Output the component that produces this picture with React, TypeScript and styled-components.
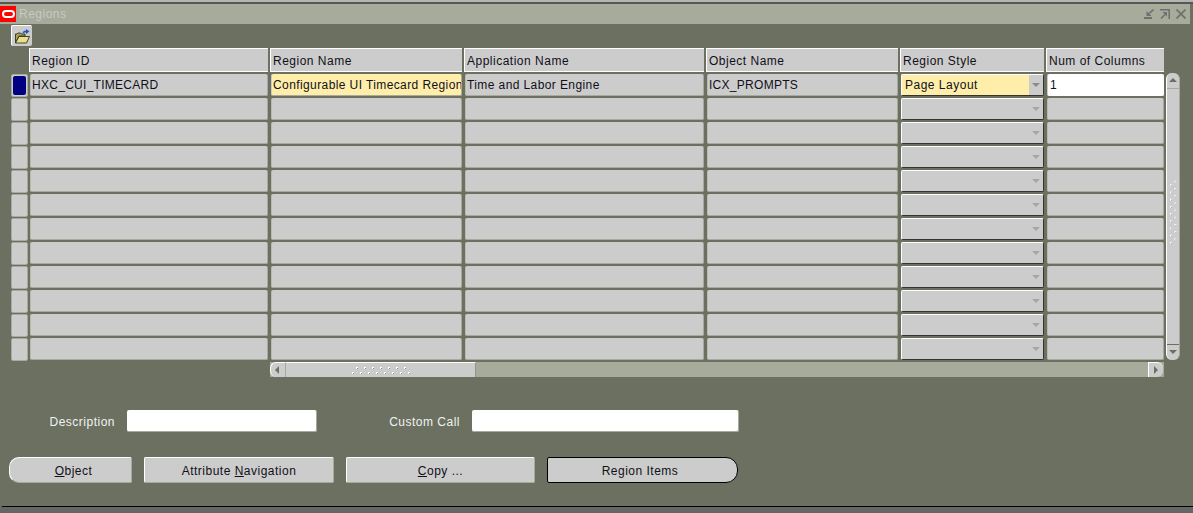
import React from 'react'
import styled, {createGlobalStyle} from "styled-components"

const columns = ["Region ID", "Region Name", "Application Name", "Object Name", "Region Style", "Num of Columns"]

const firstRow = ["HXC_CUI_TIMECARD", "Configurable UI Timecard Region", "Time and Labor Engine", "ICX_PROMPTS", "Page Layout", "1"]

const emptyRows = Array.from({length: 11}, (_, i) => i)

function Grip({cols, rows, stagger}: {cols: number, rows: number, stagger: "x" | "y"}) {
    const dots = []
    for (let c = 0; c < cols; c++) {
        for (let r = 0; r < rows; r++) {
            if (stagger === "x" && r === 0 && c === cols - 1) continue
            const x = stagger === "x" ? c * 8 + (r % 2 === 0 ? 4 : 0) : c * 5
            const y = stagger === "y" ? r * 8 + (c % 2 === 0 ? 4 : 0) : r * 5
            dots.push(<g key={c + "-" + r}>
                <rect x={x} y={y} width="2" height="2" fill="#fff"/>
                <rect x={x + 1} y={y + 1} width="1" height="1" fill="#8c8c8c"/>
            </g>)
        }
    }
    const w = stagger === "x" ? cols * 8 - 6 : cols * 5
    const h = stagger === "y" ? rows * 8 + 4 : rows * 5 - 3
    return <svg width={w} height={h} viewBox={`0 0 ${w} ${h}`}>{dots}</svg>
}

function Folder() {
    return (
        <svg width="15" height="15" viewBox="0 0 15 15">
            <path d="M0.500 5h1.500l1-1h2.500l1 1h3.500v2H4L0.500 14z" fill="#a8a45c" stroke="#33331c" strokeWidth="0.9"/>
            <path d="M4 7.500h10.500L11.500 14H0.500z" fill="#e8e08c" stroke="#33331c" strokeWidth="0.9"/>
            <path d="M7.500 4.500c0-2 1.500-3 3.500-3V0l3.500 2.500L11 5V3.500c-1.500 0-2.500 0.200-3.500 1z" fill="#1f55c8"/>
        </svg>
    )
}

function WindowButtons() {
    return (
        <>
            <svg width="10" height="10" viewBox="0 0 10 10">
                <path d="M9.500 0.500L4 5.500" fill="none" stroke="#707070" strokeWidth="1.600"/>
                <path d="M2.500 2v5h5z" fill="#707070"/>
                <rect x="0" y="8" width="8" height="2" fill="#707070"/>
            </svg>
            <svg width="10" height="10" viewBox="0 0 10 10">
                <path d="M0 0.800h9.200V10" fill="none" stroke="#707070" strokeWidth="1.600"/>
                <path d="M1 9.500L5 5.500" fill="none" stroke="#707070" strokeWidth="1.600"/>
                <path d="M2.500 3h4.500v4.500z" fill="#707070"/>
            </svg>
            <svg width="10" height="10" viewBox="0 0 10 10">
                <path d="M0.500 0.500l9 9M9.500 0.500l-9 9" fill="none" stroke="#707070" strokeWidth="1.700"/>
            </svg>
        </>
    )
}

function App() {
    return (
        <Main>
            <GlobalStyle/>
            <TopEdge/>
            <TitleBar>
                <Logo><LogoRing/></Logo>
                <WindowTitle>Regions</WindowTitle>
                <WindowControls><WindowButtons/></WindowControls>
            </TitleBar>
            <Content>
                <Toolbar>
                    <ToolButton><Folder/></ToolButton>
                </Toolbar>
                <TableArea>
                    <Table>
                        <span/>
                        {columns.map(c => <HeaderCell key={c}>{c}</HeaderCell>)}
                        <Indicator><IndicatorFill/></Indicator>
                        <Field $caps>{firstRow[0]}</Field>
                        <Field $tone="required">{firstRow[1]}</Field>
                        <Field>{firstRow[2]}</Field>
                        <Field $caps>{firstRow[3]}</Field>
                        <SelectField $tone="required">
                            <SelectText>{firstRow[4]}</SelectText>
                            <Arrow $active/>
                        </SelectField>
                        <Field $tone="active">{firstRow[5]}</Field>
                        {emptyRows.map(i => (
                            <React.Fragment key={i}>
                                <Indicator/>
                                <Field/>
                                <Field/>
                                <Field/>
                                <Field/>
                                <SelectField>
                                    <SelectText/>
                                    <Arrow/>
                                </SelectField>
                                <Field/>
                            </React.Fragment>
                        ))}
                    </Table>
                    <VScroll>
                        <VCap/>
                        <VGrip><Grip cols={2} rows={9} stagger="y"/></VGrip>
                        <VCapBottom/>
                    </VScroll>
                </TableArea>
                <HScroll>
                    <HArrowLeft/>
                    <HThumb><Grip cols={8} rows={2} stagger="x"/></HThumb>
                    <HTrack/>
                    <HArrowRight/>
                </HScroll>
                <FormRow>
                    <FieldLabel $width={115}>Description</FieldLabel>
                    <TextInput $width={190}/>
                    <FieldLabel $width={143}>Custom Call</FieldLabel>
                    <TextInput $width={267}/>
                </FormRow>
                <ButtonRow>
                    <ActionButton $width={123} $shape="left"><u>O</u>bject</ActionButton>
                    <ActionButton $width={190}>Attribute <u>N</u>avigation</ActionButton>
                    <ActionButton $width={189}><u>C</u>opy ...</ActionButton>
                    <ActionButton $width={191} $shape="right" $focused>Region Items</ActionButton>
                </ButtonRow>
            </Content>
            <BottomEdge><BottomLine/></BottomEdge>
        </Main>
    )
}

export default App

const GlobalStyle = createGlobalStyle`
    html, body {
        margin: 0;
        padding: 0;
        background: #666666;
    }
`

const Main = styled.div`
    display: flex;
    flex-direction: column;
    width: 1193px;
    height: 513px;
    overflow: hidden;
    font-family: "Liberation Sans", Arial, sans-serif;
    font-size: 12px;
    letter-spacing: 0.5px;
    color: #101018;
    background: #6b7060;
`

const TopEdge = styled.div`
    height: 2px;
    background: #b4b4b4;
    border-bottom: 2px solid #55584c;
`

const TitleBar = styled.div`
    display: flex;
    align-items: center;
    height: 20px;
    margin-right: 3px;
    background: #a6ab9b;
`

const Logo = styled.div`
    display: flex;
    align-items: center;
    justify-content: center;
    width: 16px;
    height: 16px;
    background: #ff0000;
`

const LogoRing = styled.div`
    width: 13px;
    height: 8px;
    box-sizing: border-box;
    border: 2px solid #ffffff;
    border-radius: 4px;
`

const WindowTitle = styled.div`
    margin-left: 3px;
    color: #c8c8c8;
`

const WindowControls = styled.div`
    display: flex;
    gap: 6px;
    margin-left: auto;
    margin-right: 4px;
`

const Content = styled.div`
    flex: 1;
    display: flex;
    flex-direction: column;
`

const Toolbar = styled.div`
    display: flex;
    height: 24px;
    padding-top: 1px;
    padding-left: 11px;
    box-sizing: border-box;
`

const ToolButton = styled.div`
    display: flex;
    align-items: center;
    justify-content: center;
    width: 21px;
    height: 21px;
    box-sizing: border-box;
    background: #cccccc;
    border-top: 1px solid #ffffff;
    border-left: 1px solid #ffffff;
    border-radius: 2px;
`

const TableArea = styled.div`
    display: flex;
    margin-top: 1px;
`

const Table = styled.div`
    display: grid;
    grid-template-columns: 17px 238px 191px 239px 191px 143px 117px;
    grid-template-rows: 23px repeat(12, 22px);
    column-gap: 3px;
    row-gap: 2px;
    padding-left: 10px;
`

const HeaderCell = styled.div`
    display: flex;
    align-items: center;
    height: 22px;
    padding: 1px 0 0 2px;
    box-sizing: border-box;
    background: #cccccc;
    box-shadow: -1px 0 0 #ffffff, 0 -1px 0 #ffffff, 0 1px 0 #ffffff, -1px -1px 0 #ffffff, -1px 1px 0 #ffffff;
`

const Indicator = styled.div`
    display: flex;
    width: 17px;
    height: 23px;
    margin-left: 1px;
    box-sizing: border-box;
    padding: 1px;
    background: #cccccc;
    border: 1px solid #a6ab9b;
    border-radius: 2px;
`

const IndicatorFill = styled.div`
    flex: 1;
    background: #000080;
    border-radius: 2px;
`

const toneColor = (tone?: string) => {
    if (tone === "required") return "#ffeeaa"
    if (tone === "active") return "#ffffff"
    return "#cccccc"
}

const Field = styled.div<{$tone?: string, $caps?: boolean}>`
    display: flex;
    align-items: center;
    padding-left: ${props => props.$tone === "active" ? 2 : 1}px;
    box-sizing: border-box;
    white-space: nowrap;
    overflow: hidden;
    letter-spacing: ${props => props.$caps ? 0.28 : 0.4}px;
    background: ${props => toneColor(props.$tone)};
    border-bottom: 1px solid ${props => props.$tone === "active" ? "#ffffff" : "#a6ab9b"};
    border-left: 1px solid ${props => props.$tone ? "#cccccc" : "#b8bbae"};
    border-right: 1px solid ${props => props.$tone === "active" ? "#ffffff" : "#a6ab9b"};
    border-radius: 2px;
`

const SelectField = styled.div<{$tone?: string}>`
    display: flex;
    box-sizing: border-box;
    background: #cccccc;
    border-top: 1px solid #ffffff;
    border-left: 1px solid #ffffff;
    border-bottom: 1px solid #33352c;
    border-right: 1px solid #33352c;
    border-radius: 2px;
    & > :first-child {
        background: ${props => props.$tone === "required" ? "#ffeeaa" : "transparent"};
    }
`

const SelectText = styled.div`
    flex: 1;
    display: flex;
    align-items: center;
    padding-left: 3px;
`

const Arrow = styled.div<{$active?: boolean}>`
    width: 14px;
    position: relative;
    &::after {
        content: "";
        position: absolute;
        left: 3px;
        top: 8px;
        border-left: 4px solid transparent;
        border-right: 4px solid transparent;
        border-top: 4px solid ${props => props.$active ? "#8a8a8a" : "#a6a6a6"};
    }
`

const VScroll = styled.div`
    display: flex;
    flex-direction: column;
    width: 14px;
    height: 287px;
    margin-top: 24px;
    margin-left: 2px;
    box-sizing: border-box;
    background: #cccccc;
    border-left: 1px solid #ffffff;
    border-right: 1px solid #a6ab9b;
    border-radius: 6px;
`

const VCap = styled.div`
    height: 15px;
    flex-shrink: 0;
    border-bottom: 1px solid #a6ab9b;
    position: relative;
    &::after {
        content: "";
        position: absolute;
        left: 2px;
        top: 5px;
        border-left: 4px solid transparent;
        border-right: 4px solid transparent;
        border-bottom: 4px solid #6b7060;
    }
`

const VCapBottom = styled.div`
    height: 15px;
    flex-shrink: 0;
    margin-top: auto;
    border-top: 1px solid #6b7060;
    position: relative;
    &::after {
        content: "";
        position: absolute;
        left: 2px;
        top: 5px;
        border-left: 4px solid transparent;
        border-right: 4px solid transparent;
        border-top: 4px solid #6b7060;
    }
`

const VGrip = styled.div`
    display: flex;
    padding-left: 3px;
    margin-top: 88px;
`

const HScroll = styled.div`
    display: flex;
    width: 894px;
    height: 15px;
    margin-top: 2px;
    margin-left: 270px;
    background: #a6ab9b;
`

const HArrowLeft = styled.div`
    width: 15px;
    box-sizing: border-box;
    background: #cccccc;
    border-top: 1px solid #ffffff;
    border-left: 1px solid #ffffff;
    border-radius: 6px 0 0 6px;
    position: relative;
    &::after {
        content: "";
        position: absolute;
        left: 4px;
        top: 3px;
        border-top: 4px solid transparent;
        border-bottom: 4px solid transparent;
        border-right: 4px solid #6b7060;
    }
`

const HThumb = styled.div`
    display: flex;
    align-items: center;
    justify-content: center;
    width: 191px;
    box-sizing: border-box;
    background: #cccccc;
    border-top: 1px solid #ffffff;
    border-left: 1px solid #a6ab9b;
    border-right: 1px solid #8f9484;
`

const HTrack = styled.div`
    flex: 1;
`

const HArrowRight = styled.div`
    width: 15px;
    margin-right: 1px;
    box-sizing: border-box;
    background: #cccccc;
    border-top: 1px solid #ffffff;
    border-left: 1px solid #ffffff;
    border-radius: 0 6px 6px 0;
    position: relative;
    &::after {
        content: "";
        position: absolute;
        left: 5px;
        top: 3px;
        border-top: 4px solid transparent;
        border-bottom: 4px solid transparent;
        border-left: 4px solid #6b7060;
    }
`

const FormRow = styled.div`
    display: flex;
    align-items: center;
    height: 22px;
    margin-top: 33px;
`

const FieldLabel = styled.div<{$width: number}>`
    width: ${props => props.$width}px;
    padding-top: 1px;
    text-align: right;
    color: #f2f2f2;
`

const TextInput = styled.div<{$width: number}>`
    width: ${props => props.$width}px;
    height: 22px;
    margin-left: 12px;
    box-sizing: border-box;
    background: #ffffff;
    border-bottom: 1px solid #a6ab9b;
    border-right: 1px solid #a6ab9b;
    border-radius: 2px;
`

const ButtonRow = styled.div`
    display: flex;
    gap: 12px;
    margin-top: 25px;
    padding-left: 9px;
`

const ActionButton = styled.div<{$width: number, $shape?: string, $focused?: boolean}>`
    display: flex;
    align-items: center;
    justify-content: center;
    white-space: pre;
    width: ${props => props.$width}px;
    height: 26px;
    padding-top: 1px;
    padding-left: ${props => props.$shape === "left" ? 6 : 0}px;
    padding-right: ${props => props.$shape === "right" ? 5 : 0}px;
    box-sizing: border-box;
    background: #cccccc;
    border-top: 1px solid ${props => props.$focused ? "#000000" : "#ffffff"};
    border-left: 1px solid ${props => props.$focused ? "#000000" : "#ffffff"};
    border-bottom: 1px solid ${props => props.$focused ? "#000000" : "#a6ab9b"};
    border-right: 1px solid ${props => props.$focused ? "#000000" : "#a6ab9b"};
    border-radius: ${props => props.$shape === "left" ? "10px 2px 2px 10px" : props.$shape === "right" ? "2px 12px 12px 2px" : "2px"};
`

const BottomEdge = styled.div`
    height: 7px;
    background: #666666;
`

const BottomLine = styled.div`
    height: 1px;
    margin-left: 2px;
    background: #000000;
`
